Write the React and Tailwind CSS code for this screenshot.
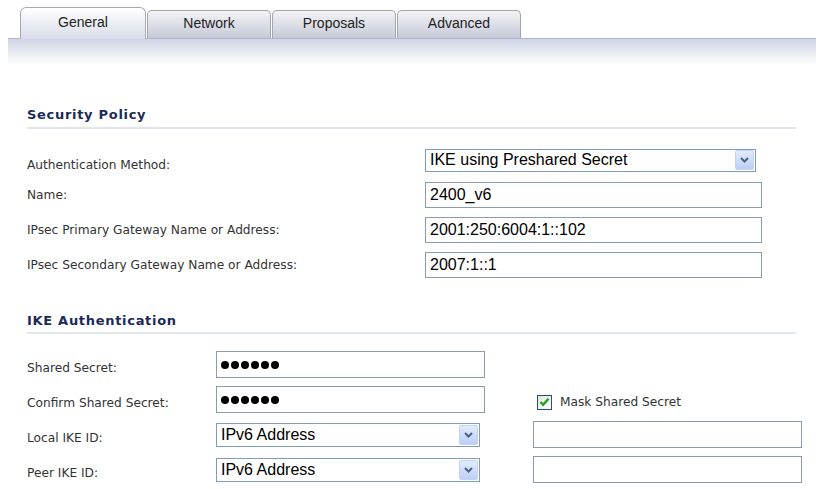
import { Fragment } from "react";

const label = "font-['DejaVu_Sans',sans-serif] text-[12.2px] text-[#333]";
const field = "font-['Liberation_Sans',Arial,sans-serif] text-[16px] text-black";

function Tab({ title, active }) {
  if (active) {
    return (
      <div className="relative z-10 -mb-px flex h-[32px] w-[126px] items-center justify-center rounded-t-[6px] border border-b-0 border-[#a7aab4] bg-gradient-to-b from-white to-[#d9dcea] pb-[2px] font-['Liberation_Sans',Arial,sans-serif] text-[14px] text-[#222]">
        {title}
      </div>
    );
  }
  return (
    <div className="flex h-[28px] w-[124px] items-center justify-center rounded-t-[5px] border border-b-0 border-[#a3a6b0] bg-gradient-to-b from-[#f4f4f6] to-[#c6c9d8] pb-[2px] font-['Liberation_Sans',Arial,sans-serif] text-[14px] text-[#222]">
      {title}
    </div>
  );
}

function Heading({ children }) {
  return (
    <div className="w-[769px] border-b-2 border-[#e1e7ef] pb-[2px] font-['DejaVu_Sans',sans-serif] text-[13px] font-bold tracking-[0.7px] text-[#1b2a5a]">
      {children}
    </div>
  );
}

function TextBox({ value, width, height = 26, children }) {
  return (
    <div
      className={`flex items-center border border-[#8a9ab2] bg-white pl-[4px] ${field}`}
      style={{ width, height }}
    >
      {children || value}
    </div>
  );
}

function Select({ value, width, height = 24 }) {
  return (
    <div
      className={`flex items-center justify-between border border-[#7f9db9] bg-white pl-[4px] pr-[1px] ${field}`}
      style={{ width, height }}
    >
      <span>{value}</span>
      <span className="flex h-[20px] w-[19px] items-center justify-center rounded-[2px] border border-[#c3d3f5] bg-gradient-to-b from-[#e2ebfd] to-[#bccff7]">
        <svg width="9" height="6" viewBox="0 0 9 6">
          <path d="M1 1 L4.5 4.5 L8 1" fill="none" stroke="#4d6185" strokeWidth="2" />
        </svg>
      </span>
    </div>
  );
}

function Dots() {
  return (
    <div className="flex gap-[2px]">
      {[0, 1, 2, 3, 4, 5].map((i) => (
        <span key={i} className="h-[8px] w-[8px] rounded-full bg-black" />
      ))}
    </div>
  );
}

export default function App() {
  const policyRows = [
    ["Authentication Method:", <Select value="IKE using Preshared Secret" width={331} height={23} />],
    ["Name:", <TextBox value="2400_v6" width={337} />],
    ["IPsec Primary Gateway Name or Address:", <TextBox value="2001:250:6004:1::102" width={337} />],
    ["IPsec Secondary Gateway Name or Address:", <TextBox value="2007:1::1" width={337} />]
  ];

  return (
    <div className="h-[489px] w-[825px] overflow-hidden bg-white">
      <div className="flex items-end gap-[1px] pl-[20px] pt-[7px]">
        <Tab title="General" active />
        <Tab title="Network" />
        <Tab title="Proposals" />
        <Tab title="Advanced" />
      </div>
      <div className="ml-[8px] h-[27px] w-[808px] border-t border-[#b2b6c4] bg-gradient-to-b from-[#d0d4e5] to-white" />

      <div className="pl-[27px] pt-[40px]">
        <Heading>Security Policy</Heading>
        <div className="mt-[14px] flex flex-col">
          {policyRows.map(([text, control], i) => (
            <div key={text} className="flex h-[35px] items-center">
              <div className={`w-[398px] ${label} ${i === 0 ? "mt-[10px]" : ""}`}>{text}</div>
              {control}
            </div>
          ))}
        </div>

        <div className="mt-[28px]">
          <Heading>IKE Authentication</Heading>
        </div>
        <div className="mt-[13px] flex flex-col">
          <div className="flex h-[35px] items-center">
            <div className={`mt-[7px] w-[189px] ${label}`}>Shared Secret:</div>
            <TextBox width={269} height={27}>
              <Dots />
            </TextBox>
          </div>
          <div className="flex h-[35px] items-center">
            <div className={`mt-[7px] w-[189px] ${label}`}>Confirm Shared Secret:</div>
            <TextBox width={269} height={27}>
              <Dots />
            </TextBox>
            <div className="ml-[52px] mt-[6px] flex items-center gap-[8px]">
              <span className="flex h-[15px] w-[15px] items-center justify-center border border-[#1c5180] bg-gradient-to-br from-[#e4e4dc] to-white">
                <svg width="11" height="10" viewBox="0 0 11 10">
                  <path d="M1.5 5 L4.2 7.8 L9.5 1.8" fill="none" stroke="#21a121" strokeWidth="2.4" />
                </svg>
              </span>
              <span className={label}>Mask Shared Secret</span>
            </div>
          </div>
          {["Local IKE ID:", "Peer IKE ID:"].map((text) => (
            <div key={text} className="flex h-[35px] items-center">
              <div className={`mt-[7px] w-[189px] ${label}`}>{text}</div>
              <Select value="IPv6 Address" width={264} height={24} />
              <div className="ml-[53px]">
                <TextBox width={269} height={27} />
              </div>
            </div>
          ))}
        </div>
      </div>
    </div>
  );
}
